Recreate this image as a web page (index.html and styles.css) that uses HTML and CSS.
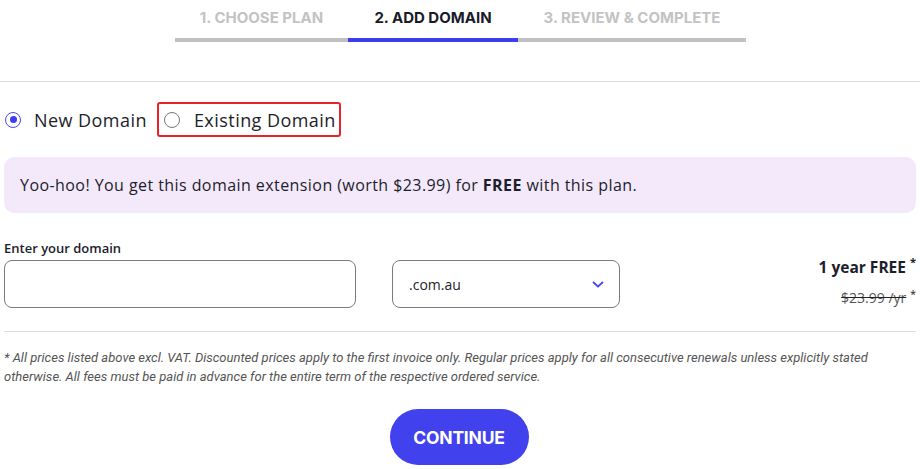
FILE: index.html
```html
<!DOCTYPE html>
<html>
<head>
<meta charset="utf-8">
<link rel="stylesheet" href="styles.css">
</head>
<body>
<div class="steps">
  <div class="step step1">1. CHOOSE PLAN</div>
  <div class="step step2 active">2. ADD DOMAIN</div>
  <div class="step step3">3. REVIEW &amp; COMPLETE</div>
</div>
<div class="divider"></div>
<div class="radios">
  <label class="radio-opt checked"><span class="radio"><span class="dot"></span></span>New Domain</label>
  <label class="radio-opt highlight"><span class="radio"></span>Existing Domain</label>
</div>
<div class="banner"><span>Yoo-hoo! You get this domain extension (worth $23.99) for <b>FREE</b> with this plan.</span></div>
<div class="form">
  <div class="field">
    <div class="label">Enter your domain</div>
    <div class="input"></div>
  </div>
  <div class="select">
    <span>.com.au</span>
    <svg width="14" height="10" viewBox="0 0 14 10"><path d="M2 3 L7 7.5 L12 3" fill="none" stroke="#4a4af0" stroke-width="1.8"/></svg>
  </div>
  <div class="price">
    <div class="free">1 year FREE <sup>*</sup></div>
    <div class="old"><s>$23.99 /yr</s> <sup>*</sup></div>
  </div>
</div>
<div class="rule"></div>
<p class="note">* All prices listed above excl. VAT. Discounted prices apply to the first invoice only. Regular prices apply for all consecutive renewals unless explicitly stated otherwise. All fees must be paid in advance for the entire term of the respective ordered service.</p>
<div class="actions"><button class="continue">CONTINUE</button></div>
</body>
</html>
```
FILE: styles.css
```css
html, body { margin: 0; padding: 0; background: #fff; }
body { width: 920px; height: 469px; overflow: hidden; font-family: "Open Sans", "Noto Sans", sans-serif; color: #1d1d2b; }

.steps { display: flex; justify-content: center; padding-left: 1px; }
.step { box-sizing: border-box; text-align: center; font-family: Inter, sans-serif; font-weight: 700; font-size: 15px; color: #c3c3c3; height: 42px; padding-top: 8px; border-bottom: 4px solid #c0c0c0; letter-spacing: 0; }
.step1 { width: 173px; }
.step2 { width: 170px; color: #1a1a28; border-bottom-color: #3d3df0; }
.step3 { width: 228px; }

.divider { height: 1px; background: #dcdcdc; margin-top: 39px; }

.radios { display: flex; align-items: center; padding: 20px 0 0 5px; height: 35px; }
.radio-opt { display: flex; align-items: center; font-size: 18px; letter-spacing: 0.45px; color: #1d1d2b; }
.radio { width: 16px; height: 16px; border: 1.5px solid #777; border-radius: 50%; box-sizing: border-box; display: flex; align-items: center; justify-content: center; margin-right: 13px; }
.checked .radio { border-color: #4a4af0; }
.dot { width: 7px; height: 7px; border-radius: 50%; background: #3d3df0; }
.checked { margin-right: 10px; }
.highlight { border: 2px solid #e8222a; border-radius: 3px; height: 35px; box-sizing: border-box; padding: 0 3px 0 5px; }
.highlight .radio { margin-right: 14px; }

.banner { margin: 20px 4px 0 4px; height: 56px; box-sizing: border-box; background: #f3e9fb; border-radius: 10px; padding: 0 16px; display: flex; align-items: center; font-size: 16px; color: #1d1d2b; letter-spacing: 0.43px; }
.banner b { font-weight: 700; }

.form { display: flex; align-items: flex-end; margin: 26px 4px 0 4px; }
.label { font-size: 13px; font-weight: 600; margin-bottom: 3px; }
.input { width: 352px; height: 48px; box-sizing: border-box; border: 1px solid #7a7a7a; border-radius: 8px; }
.select { width: 228px; height: 48px; box-sizing: border-box; border: 1px solid #7a7a7a; border-radius: 8px; margin-left: 36px; display: flex; align-items: center; justify-content: space-between; padding: 0 14px 0 16px; font-size: 14px; }
.price { flex: 1; align-self: stretch; text-align: right; display: flex; flex-direction: column; align-items: flex-end; padding-top: 15px; }
.free { font-weight: 700; font-size: 15.5px; color: #1d1d2b; }
.old { font-size: 14px; color: #555; margin-top: 8px; }
.old s { text-decoration-color: #222; }
sup { font-size: 11px; color: #222; vertical-align: 5px; }
.free sup { vertical-align: 7px; }

.rule { height: 1px; background: #dcdcdc; margin: 23px 4px 0 4px; }
.note { font-family: Roboto, sans-serif; font-style: italic; font-size: 13px; letter-spacing: 0; line-height: 19px; color: #555; margin: 16px 4px 0 4px; }

.actions { display: flex; justify-content: center; margin-top: 23px; padding-right: 2px; }
.continue { width: 139px; height: 56px; border: none; border-radius: 28px; background: #4141ee; color: #fff; font-family: Inter, sans-serif; font-weight: 700; font-size: 17.5px; letter-spacing: -0.2px; }
```
